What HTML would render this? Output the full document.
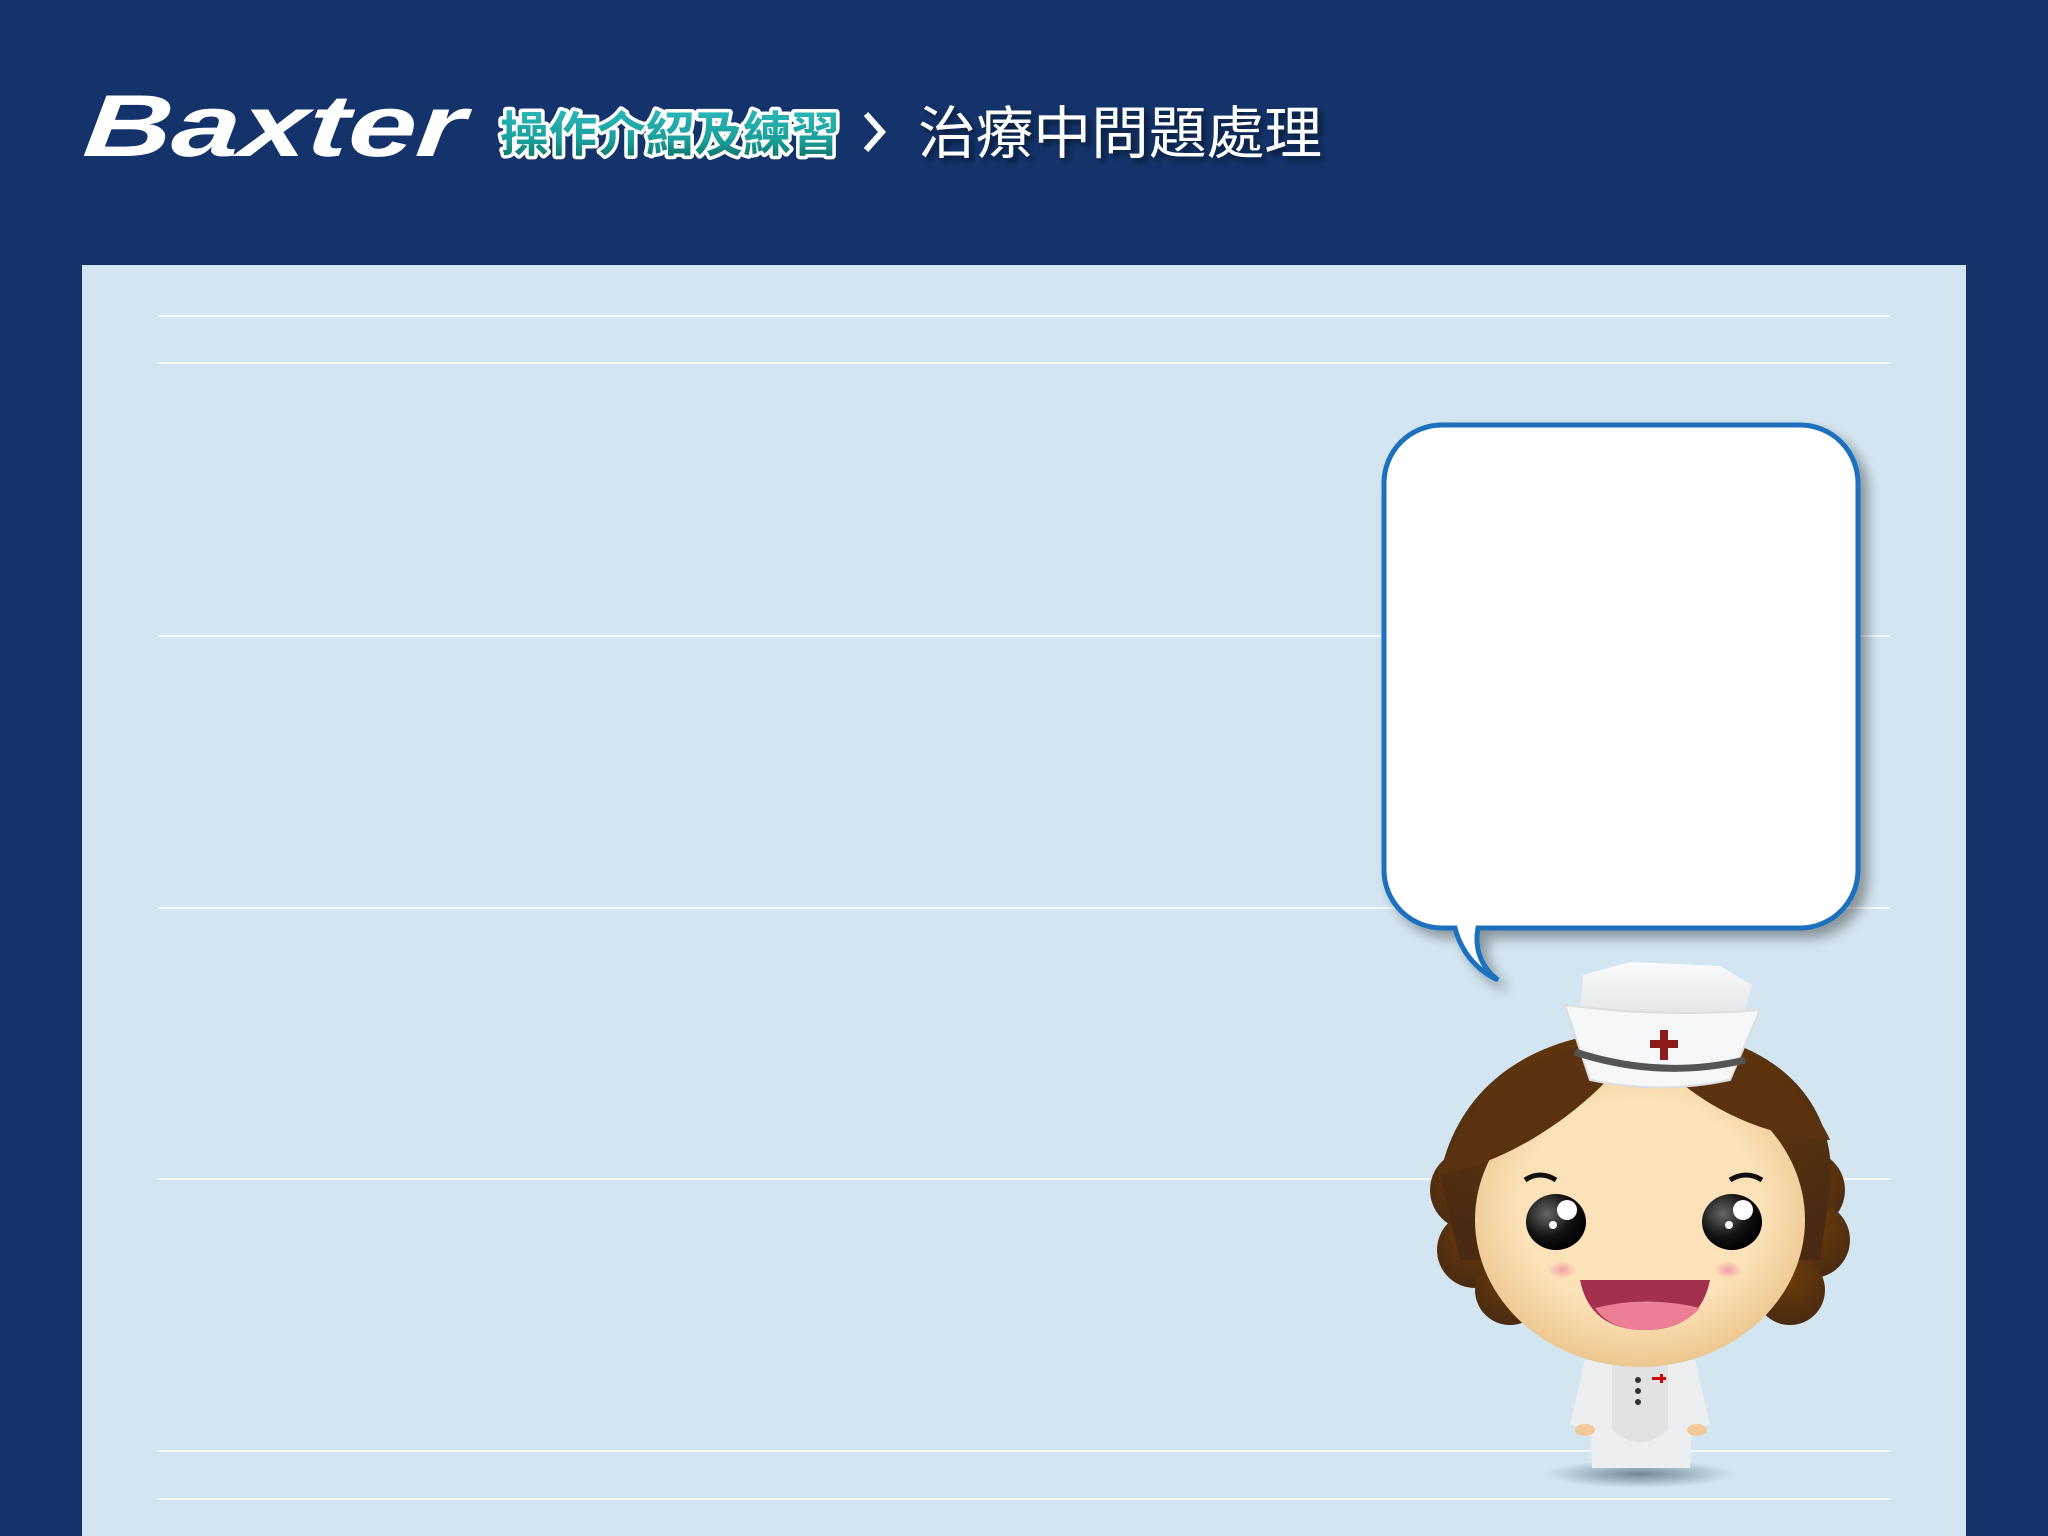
<!DOCTYPE html>
<html><head><meta charset="utf-8"><style>
html,body{margin:0;padding:0;background:#13336a;}
svg{display:block}
</style></head><body>
<svg width="2048" height="1536" viewBox="0 0 2048 1536" xmlns="http://www.w3.org/2000/svg">
<defs>
<linearGradient id="teal" x1="0" y1="0" x2="0" y2="1">
<stop offset="0" stop-color="#2bb8b8"/><stop offset="0.6" stop-color="#1a9e9a"/><stop offset="1" stop-color="#0b6b5c"/></linearGradient>
<radialGradient id="face" cx="0.5" cy="0.45" r="0.6"><stop offset="0.6" stop-color="#fce2b9"/><stop offset="1" stop-color="#e9bf85"/></radialGradient>
<radialGradient id="hair" cx="0.5" cy="0.3" r="0.7"><stop offset="0" stop-color="#6b3c0a"/><stop offset="1" stop-color="#4a2a12"/></radialGradient>
<radialGradient id="eye" cx="0.35" cy="0.35" r="0.7"><stop offset="0" stop-color="#666"/><stop offset="0.6" stop-color="#111"/><stop offset="1" stop-color="#000"/></radialGradient>
<radialGradient id="shadow" cx="0.5" cy="0.5" r="0.5"><stop offset="0" stop-color="#5a6f80" stop-opacity="0.8"/><stop offset="1" stop-color="#5a6f80" stop-opacity="0"/></radialGradient>
<radialGradient id="blush" cx="0.5" cy="0.5" r="0.5"><stop offset="0" stop-color="#f2a0a8"/><stop offset="1" stop-color="#f2a0a8" stop-opacity="0"/></radialGradient>
<linearGradient id="hat" x1="0" y1="0" x2="0" y2="1"><stop offset="0" stop-color="#fbfbfc"/><stop offset="1" stop-color="#e4e6e9"/></linearGradient>
<filter id="ds" x="-10%" y="-10%" width="130%" height="130%"><feGaussianBlur in="SourceAlpha" stdDeviation="6"/><feOffset dx="8" dy="8"/><feComponentTransfer><feFuncA type="linear" slope="0.35"/></feComponentTransfer><feMerge><feMergeNode/><feMergeNode in="SourceGraphic"/></feMerge></filter>
<filter id="ts"><feGaussianBlur in="SourceAlpha" stdDeviation="3"/><feOffset dx="4" dy="4"/><feComponentTransfer><feFuncA type="linear" slope="0.5"/></feComponentTransfer><feMerge><feMergeNode/><feMergeNode in="SourceGraphic"/></feMerge></filter>
</defs>
<rect width="2048" height="1536" fill="#13336a"/>
<rect x="82" y="265" width="1884" height="1271" fill="#d3e5f0"/>
<g stroke="#f4f8fb" stroke-width="2">
<line x1="158" y1="316" x2="1890" y2="316"/><line x1="158" y1="363" x2="1890" y2="363"/>
<line x1="158" y1="636" x2="1890" y2="636"/><line x1="158" y1="908" x2="1890" y2="908"/>
<line x1="158" y1="1179" x2="1890" y2="1179"/><line x1="158" y1="1451" x2="1890" y2="1451"/>
<line x1="158" y1="1499" x2="1890" y2="1499"/>
</g>
<text x="84" y="156" font-family="Liberation Sans, sans-serif" font-weight="bold" font-style="italic" font-size="88" fill="#fff" textLength="380" lengthAdjust="spacingAndGlyphs" transform="skewX(-6) translate(14,0)">Baxter</text>
<text x="500" y="151" font-family="Liberation Sans, Noto Sans CJK TC, sans-serif" font-weight="bold" font-size="48" fill="url(#teal)" stroke="#fff" stroke-width="7" paint-order="stroke" stroke-linejoin="round" textLength="340" lengthAdjust="spacingAndGlyphs">操作介紹及練習</text>
<path d="M866 114 L882 132 L866 150" fill="none" stroke="#fff" stroke-width="6"/>
<text x="918" y="153" font-family="Liberation Sans, Noto Sans CJK TC, sans-serif" font-size="57" fill="#fff" filter="url(#ts)" textLength="404" lengthAdjust="spacingAndGlyphs">治療中問題處理</text>
<g filter="url(#ds)">
<path d="M1442 425 H1800 A58 58 0 0 1 1858 483 V870 A58 58 0 0 1 1800 928 H1478 C1474 950 1482 968 1498 980 C1480 972 1462 955 1455 928 H1442 A58 58 0 0 1 1384 870 V483 A58 58 0 0 1 1442 425 Z" fill="#fff" stroke="#1a6fbd" stroke-width="5"/>
</g>
<ellipse cx="1640" cy="1474" rx="95" ry="14" fill="url(#shadow)"/>
<path d="M1585 1360 L1570 1425 L1590 1428 L1592 1468 L1690 1468 L1692 1428 L1710 1425 L1695 1360 Z" fill="#eceeef"/>
<path d="M1612 1360 L1612 1430 Q1640 1455 1668 1430 L1668 1360 Z" fill="#e0e2e4"/>
<ellipse cx="1585" cy="1430" rx="10" ry="6" fill="#f3c99a"/><ellipse cx="1697" cy="1430" rx="10" ry="6" fill="#f3c99a"/>
<circle cx="1638" cy="1380" r="3" fill="#333"/><circle cx="1638" cy="1391" r="3" fill="#333"/><circle cx="1638" cy="1402" r="3" fill="#333"/>
<path d="M1652 1377h8v-3h3v3h3v3h-3v3h-3v-3h-8z" fill="#c00"/>
<g fill="url(#hair)">
<circle cx="1470" cy="1190" r="40"/><circle cx="1475" cy="1250" r="38"/><circle cx="1510" cy="1290" r="35"/>
<circle cx="1805" cy="1190" r="40"/><circle cx="1812" cy="1240" r="38"/><circle cx="1790" cy="1290" r="35"/>
<path d="M1440 1175 C1460 1080 1540 1030 1650 1030 C1770 1030 1840 1100 1830 1190 L1820 1260 L1460 1260 Z"/>
</g>
<ellipse cx="1640" cy="1220" rx="165" ry="147" fill="url(#face)"/>
<path d="M1440 1175 C1470 1080 1550 1040 1640 1040 C1600 1100 1520 1160 1440 1175 Z" fill="#5a3210"/>
<path d="M1640 1040 C1700 1040 1800 1070 1830 1140 C1790 1140 1700 1120 1640 1040 Z" fill="#5a3210"/>
<path d="M1580 1012 L1583 975 L1630 962 L1720 966 L1752 985 L1745 1012 Z" fill="url(#hat)"/>
<path d="M1565 1005 Q1660 1018 1760 1010 L1730 1080 Q1660 1095 1590 1080 Z" fill="#f6f7f8" stroke="#ddd" stroke-width="2"/>
<path d="M1575 1052 Q1660 1080 1745 1060" fill="none" stroke="#555" stroke-width="7"/>
<path d="M1650 1040h10v-10h8v10h10v8h-10v12h-8v-12h-10z" fill="#8e1b1b"/>
<path d="M1525 1180 Q1540 1170 1556 1180" fill="none" stroke="#111" stroke-width="5"/>
<path d="M1730 1180 Q1746 1170 1762 1180" fill="none" stroke="#111" stroke-width="5"/>
<ellipse cx="1556" cy="1222" rx="30" ry="28" fill="url(#eye)"/><ellipse cx="1732" cy="1222" rx="30" ry="28" fill="url(#eye)"/>
<circle cx="1567" cy="1210" r="10" fill="#fff"/><circle cx="1553" cy="1225" r="4" fill="#fff"/>
<circle cx="1743" cy="1210" r="10" fill="#fff"/><circle cx="1729" cy="1225" r="4" fill="#fff"/>
<ellipse cx="1562" cy="1270" rx="14" ry="9" fill="url(#blush)"/><ellipse cx="1728" cy="1270" rx="14" ry="9" fill="url(#blush)"/>
<path d="M1580 1280 L1710 1280 Q1700 1330 1645 1330 Q1590 1330 1580 1280 Z" fill="#a3304f"/>
<path d="M1595 1308 Q1645 1295 1700 1308 Q1680 1330 1645 1330 Q1610 1330 1595 1308 Z" fill="#ec7e95"/>
</svg>
</body></html>
